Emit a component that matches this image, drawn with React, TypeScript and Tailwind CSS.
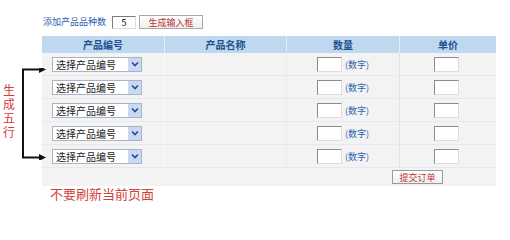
import React from "react";

const rows = [1, 2, 3, 4, 5];

const Chevron: React.FC = () => (
  <svg width="8" height="6" viewBox="0 0 8 6">
    <path d="M1 1.5 L4 4.5 L7 1.5" fill="none" stroke="#2b4a8a" strokeWidth="1.6" />
  </svg>
);

const ProductSelect: React.FC = () => (
  <div className="flex h-[15px] w-[90px] items-stretch border border-[#a9b3c2] bg-white">
    <span className="flex-1 pl-[3px] text-[10px] leading-[13px] text-[#222]">选择产品编号</span>
    <span className="flex w-[13px] items-center justify-center bg-[#c9d9f5]">
      <Chevron />
    </span>
  </div>
);

const SmallInput: React.FC = () => (
  <div className="h-[15px] w-[25px] border-t border-l border-b border-r border-t-[#8c8c8c] border-l-[#8c8c8c] border-b-[#e9d8d4] border-r-[#e9d8d4] bg-white" />
);

const App: React.FC = () => {
  return (
    <div
      className="h-[211px] w-[510px] overflow-hidden bg-white"
      style={{ fontFamily: '"Noto Sans CJK SC", "Noto Sans", sans-serif' }}
    >
      {/* top controls */}
      <div className="ml-[43px] mt-[15px] flex h-[14px] items-center">
        <span className="text-[9px] leading-[12px] text-[#2c62b0]">添加产品品种数</span>
        <div className="ml-[6px] flex h-[13px] w-[24px] items-center justify-center border-t border-l border-b border-r border-t-[#7d7d7d] border-l-[#7d7d7d] border-b-[#dddddd] border-r-[#dddddd] bg-white text-[9px] leading-[11px] text-black">
          5
        </div>
        <button className="ml-[3px] flex h-[14px] w-[64px] items-center justify-center border border-[#a8a8a8] bg-gradient-to-b from-white to-[#efefef] text-[9px] leading-[11px] text-[#c0312f]">
          生成输入框
        </button>
      </div>

      <div className="mt-[7px] flex">
        {/* annotation */}
        <div className="relative w-[42px]">
          <div className="ml-[3px] mt-[47px] w-[12px] break-all text-[12px] leading-[14px] text-[#d2403a]">
            生成五行
          </div>
          <svg className="absolute left-[20px] top-[32px]" width="27" height="92" viewBox="0 0 27 92">
            <path d="M3 1 V90" stroke="#111" strokeWidth="2" fill="none" />
            <path d="M2 1.5 H21" stroke="#111" strokeWidth="2" fill="none" />
            <path d="M2 89.5 H21" stroke="#111" strokeWidth="2" fill="none" />
            <path d="M19 -2 L26 1.5 L19 5 Z" fill="#111" />
            <path d="M19 86 L26 89.5 L19 93 Z" fill="#111" />
          </svg>
        </div>

        {/* table */}
        <div className="flex w-[454px] flex-col">
          <div className="grid h-[17px] grid-cols-[123px_122px_113px_96px] bg-[#bed8ef] text-[10px] font-bold leading-[17px] text-[#23508f]">
            <div className="border-r border-[#e4eef8] text-center">产品编号</div>
            <div className="border-r border-[#e4eef8] text-center">产品名称</div>
            <div className="border-r border-[#e4eef8] text-center">数量</div>
            <div className="text-center">单价</div>
          </div>
          {rows.map((r) => (
            <div
              key={r}
              className="grid h-[23px] grid-cols-[123px_122px_113px_96px] border-b border-[#e3e9f0] bg-[#f3f3f3]"
            >
              <div className="flex items-center border-r border-[#fbfbfb] pl-[10px]">
                <ProductSelect />
              </div>
              <div className="border-r border-[#e6ecf2]" />
              <div className="flex items-center border-r border-[#d5e3f1] pl-[30px]">
                <SmallInput />
                <span className="ml-[3px] text-[9px] leading-[11px] text-[#2c62b0]">(数字)</span>
              </div>
              <div className="flex items-center pl-[34px]">
                <SmallInput />
              </div>
            </div>
          ))}
          <div className="flex h-[18px] items-center justify-end bg-[#f3f3f3] pr-[53px]">
            <button className="flex h-[14px] w-[51px] items-center justify-center border border-[#9a9a9a] bg-gradient-to-b from-white to-[#efefef] text-[9px] leading-[11px] text-[#c0312f]">
              提交订单
            </button>
          </div>
          <div className="ml-[8px] text-[13px] leading-[15px] text-[#d2403a]">不要刷新当前页面</div>
        </div>
      </div>
    </div>
  );
};

export default App;
